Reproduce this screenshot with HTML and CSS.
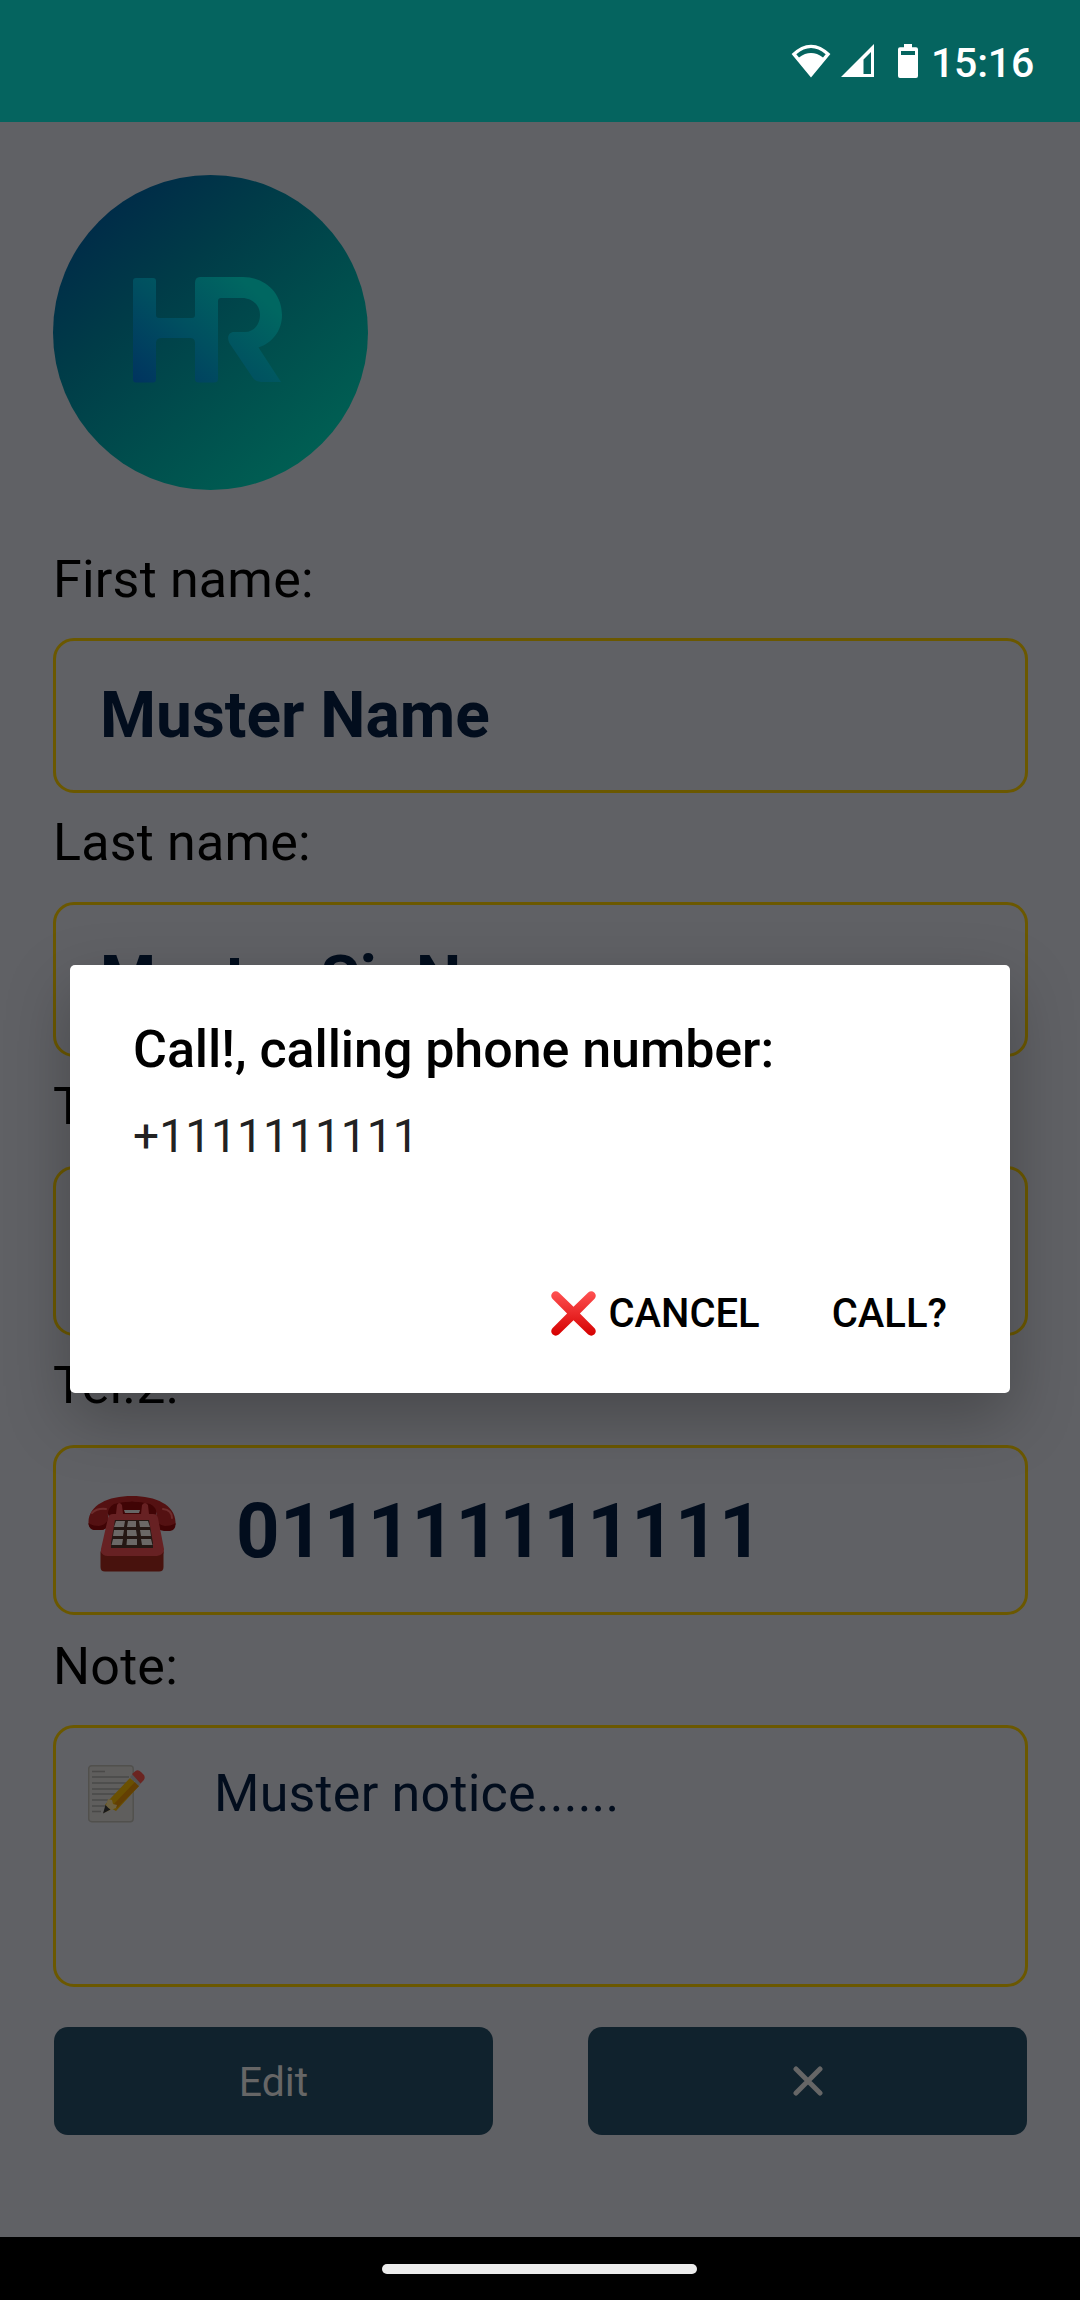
FILE: index.html
```html
<!DOCTYPE html>
<html lang="en">
<head>
<meta charset="utf-8">
<title>Contact</title>
<link rel="stylesheet" href="styles.css">
</head>
<body>
<div class="screen">
  <header class="status">
    <svg class="status-wifi" width="40" height="34" viewBox="0 0 40 34"><path fill="#fff" fill-rule="evenodd" d="M0.6 10Q20-8.5 39.4 10L20 33.5ZM5.3 10.2L8 13.4Q20 4.6 32 13.4L34.7 10.2Q20-2 5.3 10.2Z"/></svg>
    <svg class="status-signal" width="33" height="33" viewBox="0 0 33 33"><path fill="#fff" fill-rule="evenodd" d="M0 33L33 0V33ZM22.5 15.500V30H30V8Z"/></svg>
    <svg class="status-battery" width="20" height="34" viewBox="0 0 20 34"><path fill="#fff" fill-rule="evenodd" d="M6 0H14V3.300H18Q20 3.300 20 5.300V32Q20 34 18 34H2Q0 34 0 32V5.300Q0 3.300 2 3.300H6ZM3 7V11H17V7Z"/></svg>
    <span class="status-time">15:16</span>
  </header>

  <main class="page">
    <svg class="avatar" width="315" height="315" viewBox="0 0 315 315">
      <defs>
        <linearGradient id="disc" x1="0.14" y1="0.14" x2="0.8" y2="0.92"><stop offset="0" stop-color="#002c48"/><stop offset="0.3" stop-color="#003c48"/><stop offset="0.65" stop-color="#004e4d"/><stop offset="1" stop-color="#005f53"/></linearGradient>
        <linearGradient id="mark" gradientUnits="userSpaceOnUse" x1="82" y1="208" x2="182" y2="98"><stop offset="0" stop-color="#00345f"/><stop offset="0.5" stop-color="#004f60"/><stop offset="1" stop-color="#006761"/></linearGradient>
      </defs>
      <circle cx="157.500" cy="157.500" r="157.500" fill="url(#disc)"/>
      <path fill="url(#mark)" d="M83 103H100Q103 103 103 106V140Q103 143 106 143H139Q142 143 142 140V108Q142 102 147 102H190C212 102 229 118 229 140C229 156 219 168 205.500 172.500L228 207H208Q203 207 200 203L177 169C173 162 176 157 181 157H192C201 157 207 149 207 140C207 130 199 123 189 123H168Q165 123 165 126V204Q165 207.500 161 207.500H146Q142 207.500 142 204V168Q142 163 137 163H109Q103 163 103 168V204Q103 207.500 100 207.500H83Q80 207.500 80 204V106Q80 103 83 103Z"/>
    </svg>

    <div class="label label-first">First name:</div>
    <div class="field">Muster Name</div>
    <div class="label">Last name:</div>
    <div class="field">Muster Sir Name</div>
    <div class="label">Tel.1:</div>
    <div class="field field-phone"></div>
    <div class="label">Tel.2:</div>
    <div class="field field-phone">
      <svg class="phone" width="88" height="76" viewBox="0 0 88 76">
        <path fill="#400405" d="M18 12Q22 5 44 5T70 12L66 24H22Z"/>
        <path fill="#541112" d="M.5 26C1 9 20 0 44 0S87 9 87.500 26Q88 34 80 34H74Q68 34 68 28V20Q70 12 62 8Q44 3 26 8Q19 12 20 20V28Q19 34 12 34H6Q.5 33 .5 26Z"/>
        <path fill="#400405" d="M.5 27Q4 30 11 30Q18 29 20 23V28Q19 34 12 34H6Q.5 33 .5 27ZM87.500 27Q84 30 77 30Q70 29 68 23V28Q69 34 76 35H82Q88 34 87.500 27Z"/>
        <path fill="none" stroke="#6e2c2c" stroke-width="2" stroke-linecap="round" d="M4 17Q9 12 18 13M75 13Q84 14 84 22"/>
        <path fill="#672123" d="M28 18L29 9Q31 5 34 9L35 18H53L54 9Q57 5 60 9L61 18H65Q69 18 70 22L76 53Q76 62 70 62H18Q12 62 13 53L20 22Q21 18 25 18Z"/>
        <path fill="#666" d="M36 14H52L51 17H37Z"/>
        <path fill="#241713" d="M27 24H61L65 47V52H23V47Z"/>
        <path fill="#6b6866" d="M28 25H37L36 31H26ZM40 25H48V31H39ZM51 25H60L62 31H52ZM26 34H36L35 40H25ZM39 34H48L49 40H39ZM52 34H62L63 40H53ZM25 43H35L34 49H23.500ZM39 43H49V49H38.500ZM53 43H63L64.500 49H54Z"/>
        <path fill="#48120d" d="M12.500 55Q14 60 20 60H69Q75 59 75.500 55V71Q75.500 75.500 71 75.500H17Q12.500 75.500 12.500 71Z"/>
      </svg>
      <span class="phone-number">011111111111</span>
    </div>
    <div class="label label-note">Note:</div>
    <div class="field field-note">
      <svg class="memo" width="60" height="58" viewBox="0 0 60 58">
        <rect x=".7" y=".7" width="44.500" height="56" rx="3" fill="#5f5e5d" stroke="#51504d" stroke-width="1.400"/>
        <path stroke="#4a4948" stroke-width="1.700" d="M4 6.500H17M4 12H41M4 18H38M4 24H34M4 29H29M4 35H24M4 41H19M4 46.500H13"/>
        <path fill="#6a5002" d="M42 13L51 21L28 46L17 40L21 35Z"/>
        <path fill="#633f03" d="M47 17L51 21L29 43L25 40Z"/>
        <path fill="#6d6140" d="M20 34L24 35L25 39L29 40L28 43L15.500 48Z"/>
        <path fill="#191919" d="M17.500 40Q20 43 22.500 44.500L15 48.500Z"/>
        <path fill="#535354" d="M42 12L45 9L53 18L51 21Z"/>
        <path fill="#6b2521" d="M44 9L47.500 6Q50 4 53 7L56 10Q58 14 54 17L52.500 18.500Z"/>
      </svg>
      <span>Muster notice......</span>
    </div>

    <div class="actions">
      <div class="action">Edit</div>
      <div class="action action-close"><svg width="30" height="30" viewBox="0 0 30 30"><path fill="none" stroke="#666" stroke-width="5" stroke-linecap="round" d="M3 3L27 27M27 3L3 27"/></svg></div>
    </div>
  </main>

  <footer class="nav"><div class="nav-handle"></div></footer>

  <section class="dialog">
    <h1 class="dialog-title">Call!, calling phone number:</h1>
    <p class="dialog-text">+1111111111</p>
    <div class="dialog-actions">
      <div class="dialog-button">
        <svg width="45" height="45" viewBox="0 0 45 45"><defs><linearGradient id="cross" x1="0" y1="0" x2="0" y2="1"><stop offset="0" stop-color="#ff5252"/><stop offset="1" stop-color="#d50000"/></linearGradient></defs><path fill="url(#cross)" d="M1.400 7.800Q-1 4.500 1.500 1.700Q4.500-1 7.800 1.400L22.500 15.800L37.200 1.400Q40.500-1 43.500 1.700Q46 4.500 43.600 7.800L28.900 22.500L43.600 37.200Q46 40.500 43.500 43.300Q40.500 46 37.200 43.600L22.500 29.200L7.800 43.600Q4.500 46 1.500 43.300Q-1 40.500 1.400 37.200L16.100 22.500Z"/></svg>
        <span>CANCEL</span>
      </div>
      <div class="dialog-button">CALL?</div>
    </div>
  </section>
</div>
</body>
</html>
```
FILE: styles.css
```css
* { box-sizing: border-box; margin: 0; }
body { background: #000; font-family: Roboto, "Liberation Sans", sans-serif; }
svg { display: block; flex: none; }
.screen { position: relative; width: 1080px; height: 2300px; overflow: hidden; display: flex; flex-direction: column; background: #606165; }
.status { height: 122px; flex: none; display: flex; align-items: flex-start; justify-content: flex-end; padding: 44px 47px 0 0; background: #05645f; }
.status-wifi { margin-right: 10px; }
.status-signal { margin-right: 24px; }
.status-battery { margin-right: 13px; }
.status-time { width: 102px; margin-top: -5px; color: #fff; font-size: 41px; font-weight: 500; line-height: 48px; letter-spacing: -.2px; white-space: nowrap; }

.page { flex: 1; padding: 53px 53px 0; }
.label { height: 109px; padding: 19px 0 0; color: #000; font-size: 52px; line-height: 62px; letter-spacing: .2px; }
.label-first { height: 148px; padding-top: 59px; }
.label-note { height: 110px; padding-top: 21px; }
.field { width: 975px; height: 155px; display: flex; align-items: center; padding-left: 44px; border: 3px solid #6b5800; border-radius: 21px; color: #020d1d; font-size: 64px; font-weight: 700; line-height: 76px; }
.field-phone { height: 170px; padding: 2px 0 0 32px; font-size: 76px; letter-spacing: .3px; }
.phone { margin: 6px 60px 0 0; }
.phone-number { line-height: 90px; }
.field-note { height: 262px; align-items: flex-start; padding: 37px 0 0 32px; font-size: 52px; font-weight: 400; line-height: 58px; letter-spacing: .23px; }
.memo { margin-right: 66px; }
.actions { display: flex; gap: 95px; padding: 40px 0 0 1px; }
.action { width: 439px; height: 108px; display: flex; align-items: center; justify-content: center; padding-top: 2px; border-radius: 14px; background: #10222d; color: #666; font-size: 41px; line-height: 50px; }
.action-close { padding: 0 0 1px 1px; }

.nav { height: 63px; flex: none; display: flex; justify-content: center; padding: 27px 1px 0 0; background: #000; }
.nav-handle { width: 315px; height: 10px; border-radius: 5px; background: #ececec; }

.dialog { position: absolute; left: 70px; top: 965px; width: 940px; height: 428px; padding: 54px 63px 0; border-radius: 5px; background: #fff; box-shadow: 0 24px 64px rgba(0, 0, 0, .26); }
.dialog-title { color: #000; font-size: 52px; font-weight: 500; line-height: 62px; letter-spacing: -.06px; white-space: nowrap; }
.dialog-text { margin-top: 28px; color: #222; font-size: 46px; line-height: 54px; letter-spacing: .1px; }
.dialog-actions { display: flex; justify-content: flex-end; gap: 72px; margin-top: 116px; }
.dialog-button { display: flex; align-items: center; gap: 12px; height: 68px; color: #000; font-size: 40px; font-weight: 500; white-space: nowrap; }
```
